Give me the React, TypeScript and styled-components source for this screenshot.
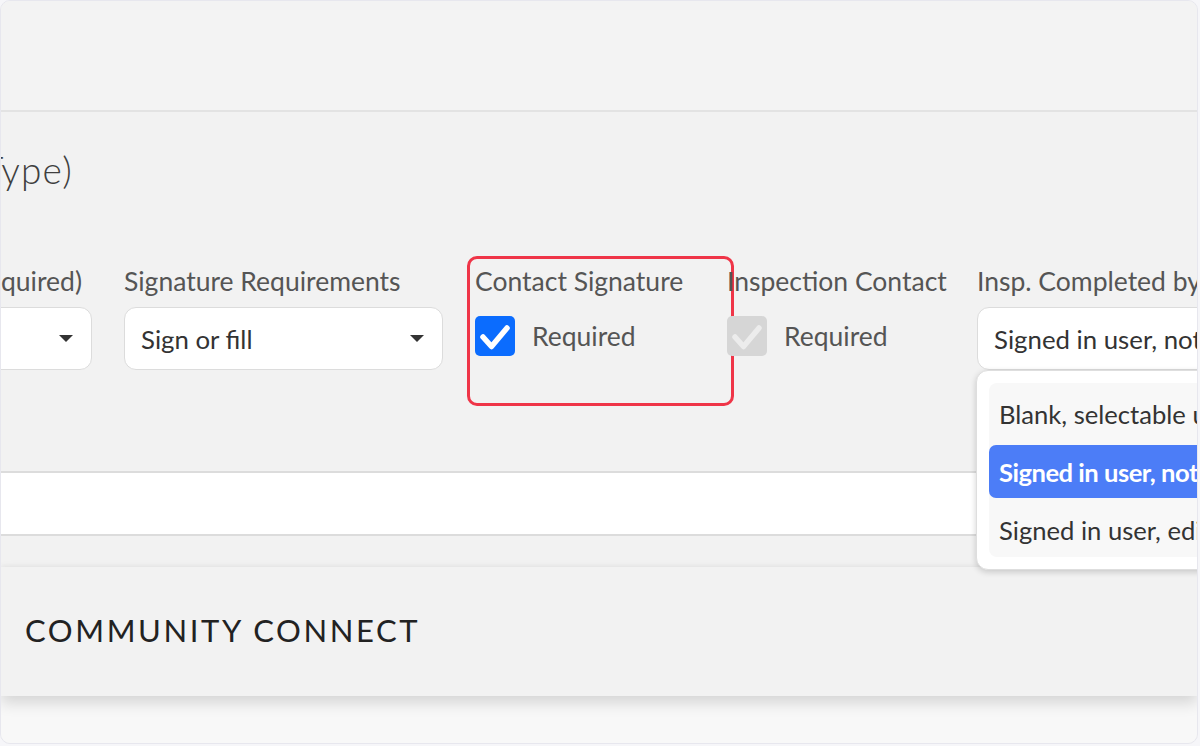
import React from "react";
import styled, { createGlobalStyle } from "styled-components";

const Global = createGlobalStyle`
  html, body { margin: 0; padding: 0; background: #f6f6f9; }
  body { width: 1200px; height: 746px; overflow: hidden; font-family: Lato, "Open Sans", sans-serif; }
  * { box-sizing: border-box; }
`;

const Frame = styled.div`
  width: 1198px;
  height: 744px;
  margin: 0 2px 2px 0;
  border: 1px solid #e7e7ee;
  border-radius: 10px;
  background: #f2f2f2;
  overflow: hidden;
  display: flex;
  flex-direction: column;
`;

const TopBar = styled.div`
  height: 111px;
  flex: none;
  border-bottom: 2px solid #e3e3e3;
  background: #f3f3f3;
`;

const Section = styled.div`
  padding-top: 38px;
  flex: none;
`;

const TitleClip = styled.div`
  width: 72px;
  display: flex;
  justify-content: flex-end;
  white-space: nowrap;
`;

const Title = styled.h2`
  margin: 0;
  font-size: 37px;
  line-height: 40px;
  font-weight: 300;
  letter-spacing: 1.2px;
  color: #3f3f3f;
`;

const FieldRow = styled.div`
  display: flex;
  gap: 32px;
  margin-top: 76px;
  margin-left: -229px;
`;

const Field = styled.div<{ $w: number }>`
  position: relative;
  flex: none;
  width: ${(p) => p.$w}px;
  display: flex;
  flex-direction: column;
  gap: 11px;
`;

const Label = styled.div<{ $end?: boolean }>`
  height: 30px;
  line-height: 30px;
  font-size: 26.5px;
  color: #555;
  white-space: nowrap;
  display: flex;
  justify-content: ${(p) => (p.$end ? "flex-end" : "flex-start")};
  padding-right: ${(p) => (p.$end ? "10px" : "0")};
`;

const Select = styled.div`
  height: 63px;
  border: 1.5px solid #dcdcdc;
  border-radius: 12px;
  background: #fff;
  display: flex;
  align-items: center;
  padding: 0 18px 0 16px;
  font-size: 25.8px;
  color: #333;
  white-space: nowrap;
  overflow: hidden;
`;

const SelectText = styled.span`
  flex: 1;
`;

const Caret = styled.span`
  width: 0;
  height: 0;
  border-left: 7px solid transparent;
  border-right: 7px solid transparent;
  border-top: 7px solid #333;
  flex: none;
`;

const CheckRow = styled.div`
  height: 63px;
  padding-bottom: 6px;
  display: flex;
  align-items: center;
  gap: 17px;
  font-size: 26.5px;
  color: #555;
`;

const Box = styled.span<{ $disabled?: boolean }>`
  width: 40px;
  height: 40px;
  border-radius: 5px;
  background: ${(p) => (p.$disabled ? "#d6d6d6" : "#0b6cfe")};
  display: flex;
  align-items: center;
  justify-content: center;
  flex: none;
`;

const Highlight = styled.div`
  position: absolute;
  left: -8px;
  top: -10px;
  width: 267px;
  height: 150px;
  border: 3px solid #ef3548;
  border-radius: 10px;
  pointer-events: none;
`;

const Menu = styled.div`
  position: absolute;
  left: -1px;
  top: 104px;
  width: 280px;
  height: 200px;
  background: #fff;
  border: 1px solid #dedede;
  border-radius: 12px;
  box-shadow: 0 2px 6px rgba(0, 0, 0, 0.18);
  padding: 12px;
  z-index: 5;
`;

const MenuList = styled.div`
  background: #f8f8f8;
  border-radius: 8px;
  padding: 4px 0 1px;
  display: flex;
  flex-direction: column;
  gap: 5px;
`;

const MenuItem = styled.div<{ $active?: boolean }>`
  height: 53px;
  display: flex;
  align-items: center;
  padding-left: 10px;
  border-radius: 7px;
  font-size: 25.6px;
  white-space: nowrap;
  background: ${(p) => (p.$active ? "#4c7df7" : "transparent")};
  color: ${(p) => (p.$active ? "#fff" : "#333")};
  font-weight: ${(p) => (p.$active ? 700 : 400)};
  letter-spacing: ${(p) => (p.$active ? "-0.5px" : "0")};
`;

const WhiteBand = styled.div`
  margin-top: 101px;
  height: 65px;
  flex: none;
  background: #fff;
  border-top: 2px solid #dcdcdc;
  border-bottom: 2px solid #dcdcdc;
`;

const Card = styled.div`
  margin-top: 31px;
  height: 129px;
  flex: none;
  background: #f2f2f2;
  display: flex;
  align-items: center;
  padding-left: 24px;
  padding-bottom: 4px;
  position: relative;
  z-index: 1;
  box-shadow: 0 -2px 4px rgba(0, 0, 0, 0.03), 0 7px 14px rgba(0, 0, 0, 0.14);
`;

const CardTitle = styled.div`
  font-size: 31px;
  letter-spacing: 2.6px;
  color: #222;
  font-weight: 400;
`;

const Bottom = styled.div`
  flex: 1;
  background: #f8f8f8;
`;

const Check = ({ color }: { color: string }) => (
  <svg width="40" height="40" viewBox="0 0 40 40">
    <polyline
      points="8,21 16.5,30.5 32,12"
      fill="none"
      stroke={color}
      strokeWidth="5.5"
      strokeLinecap="round"
      strokeLinejoin="round"
    />
  </svg>
);

export default function App() {
  return (
    <>
      <Global />
      <Frame>
        <TopBar />
        <Section>
          <TitleClip>
            <Title>Signatures (by Type)</Title>
          </TitleClip>
          <FieldRow>
            <Field $w={320}>
              <Label $end>Title (Required)</Label>
              <Select>
                <SelectText>&nbsp;</SelectText>
                <Caret />
              </Select>
            </Field>
            <Field $w={319}>
              <Label>Signature Requirements</Label>
              <Select>
                <SelectText>Sign or fill</SelectText>
                <Caret />
              </Select>
            </Field>
            <Field $w={220}>
              <Label>Contact Signature</Label>
              <CheckRow>
                <Box>
                  <Check color="#fff" />
                </Box>
                Required
              </CheckRow>
              <Highlight />
            </Field>
            <Field $w={218}>
              <Label>Inspection Contact</Label>
              <CheckRow>
                <Box $disabled>
                  <Check color="#ececec" />
                </Box>
                Required
              </CheckRow>
            </Field>
            <Field $w={320}>
              <Label>Insp. Completed by</Label>
              <Select>
                <SelectText>Signed in user, not editable</SelectText>
              </Select>
              <Menu>
                <MenuList>
                  <MenuItem>Blank, selectable user</MenuItem>
                  <MenuItem $active>Signed in user, not editable</MenuItem>
                  <MenuItem>Signed in user, editable</MenuItem>
                </MenuList>
              </Menu>
            </Field>
          </FieldRow>
        </Section>
        <WhiteBand />
        <Card>
          <CardTitle>COMMUNITY CONNECT</CardTitle>
        </Card>
        <Bottom />
      </Frame>
    </>
  );
}
